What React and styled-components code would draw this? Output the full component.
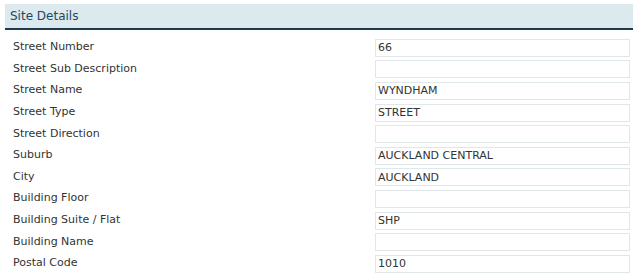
import styled, { createGlobalStyle } from 'styled-components';

const GlobalStyle = createGlobalStyle`
    body {
        margin: 0;
        background: #fff;
        font-family: "DejaVu Sans", Verdana, sans-serif;
    }
`

const FIELDS = [
    { label: 'Street Number', value: '66' },
    { label: 'Street Sub Description', value: '' },
    { label: 'Street Name', value: 'WYNDHAM' },
    { label: 'Street Type', value: 'STREET' },
    { label: 'Street Direction', value: '' },
    { label: 'Suburb', value: 'AUCKLAND CENTRAL' },
    { label: 'City', value: 'AUCKLAND' },
    { label: 'Building Floor', value: '' },
    { label: 'Building Suite / Flat', value: 'SHP' },
    { label: 'Building Name', value: '' },
    { label: 'Postal Code', value: '1010' },
]

const Panel = styled.section`
    width: 628px;
    margin: 4px 0 0 5px;
`

const PanelHeader = styled.h2`
    margin: 0;
    height: 24px;
    padding: 0 5px;
    display: flex;
    align-items: center;
    background: #dce9ee;
    border-bottom: 2px solid #1d3b50;
    color: #23475e;
    font-size: 12px;
    font-weight: normal;
`

const FieldList = styled.div`
    display: flex;
    flex-direction: column;
    padding: 7px 3px 0 8px;
`

const FieldRow = styled.div`
    display: grid;
    grid-template-columns: 362px 255px;
    align-items: center;
    height: 21.6px;
`

const FieldLabel = styled.label`
    font-size: 11px;
    color: #333;
    margin-top: -2px;
`

const FieldInput = styled.div`
    box-sizing: border-box;
    height: 18px;
    border: 1px solid #dfe7ea;
    padding: 0 2px;
    display: flex;
    align-items: center;
    font-size: 11px;
    color: #333;
`

const App = () => {
    return <>
        <GlobalStyle />
        <Panel>
            <PanelHeader>Site Details</PanelHeader>
            <FieldList>
                {FIELDS.map(f => <FieldRow key={f.label}>
                    <FieldLabel>{f.label}</FieldLabel>
                    <FieldInput>{f.value}</FieldInput>
                </FieldRow>)}
            </FieldList>
        </Panel>
    </>
}

export default App;
